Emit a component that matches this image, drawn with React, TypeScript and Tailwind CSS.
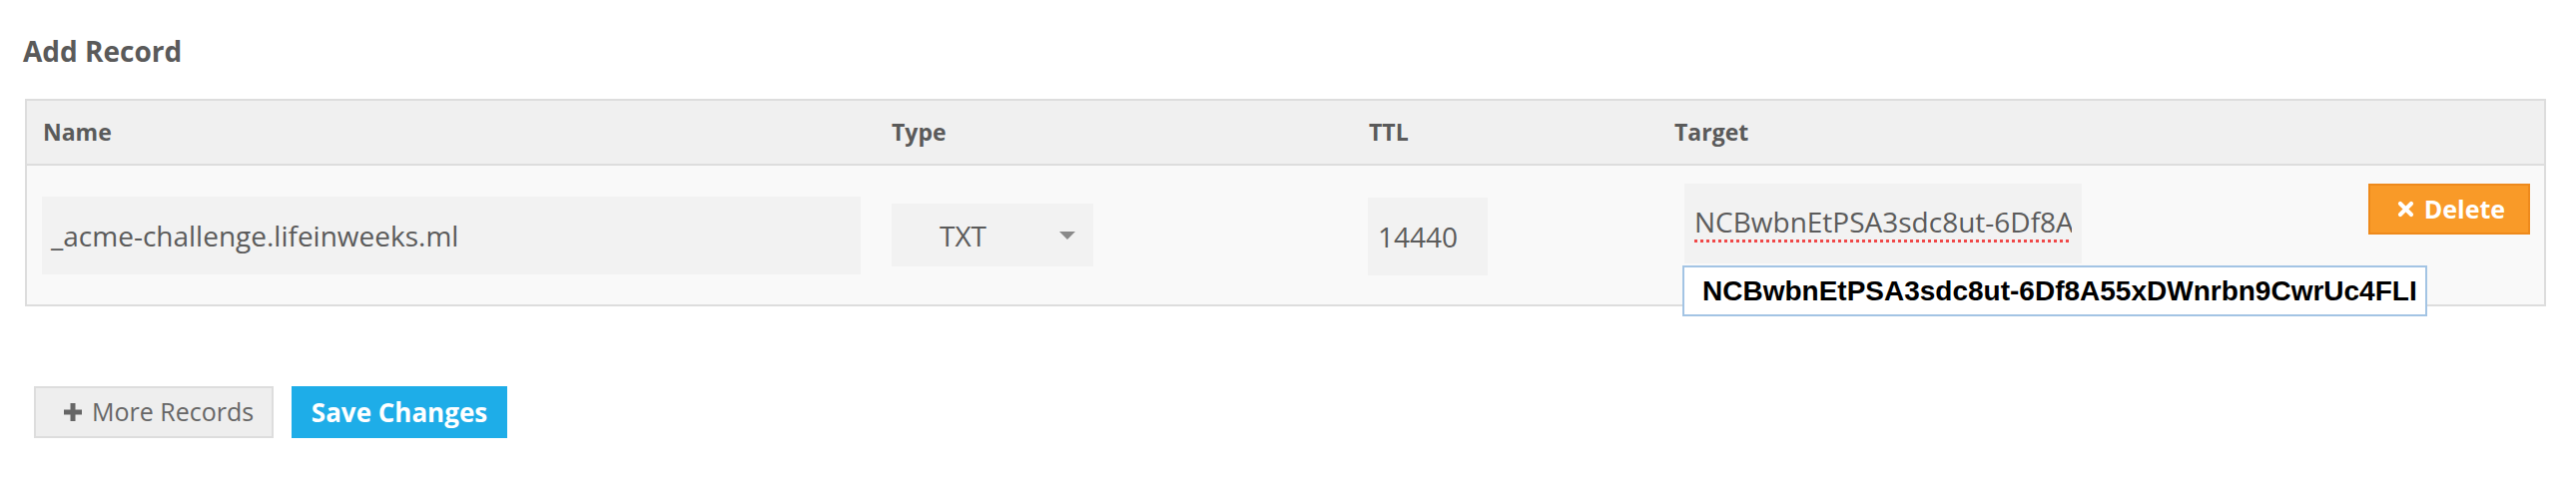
const PlusIcon = () => (
  <svg width="20" height="20" viewBox="0 0 20 20" className="shrink-0">
    <rect x="7.5" y="1" width="5" height="18" fill="#666" />
    <rect x="1" y="7.5" width="18" height="5" fill="#666" />
  </svg>
);

const TimesIcon = () => (
  <svg width="17" height="17" viewBox="0 0 17 17" className="shrink-0">
    <path d="M3 3 L14 14 M14 3 L3 14" stroke="#fff" strokeWidth="4.2" strokeLinecap="round" />
  </svg>
);

const App = () => {
  return (
    <div className="w-full h-[490px] bg-white pl-[23px] font-['Open_Sans',sans-serif] text-[#555]">
      {/* Title */}
      <h2 className="pt-[32px] text-[28px] leading-[38px] font-bold text-[#5a5a5a]">Add Record</h2>

      {/* Records table */}
      <div className="ml-[2px] mt-[29px] w-[2525px] border-2 border-[#ddd]">
        <div className="grid h-[65px] grid-cols-[850px_478px_306px_1fr] items-center border-b-2 border-[#ddd] bg-[#f0f0f0] pl-[16px] text-[23px] font-bold text-[#5a5a5a]">
          <span>Name</span>
          <span>Type</span>
          <span>TTL</span>
          <span>Target</span>
        </div>

        <div className="grid h-[139px] grid-cols-[850px_478px_306px_1fr_auto] items-start bg-[#f9f9f9] pl-[15px] pr-[14px] text-[28px] text-[#5b5b5b]">
          <div className="mt-[31px] flex h-[78px] w-[820px] items-center bg-[#f2f2f2] pl-[9px]">
            _acme-challenge.lifeinweeks.ml
          </div>

          <div className="mt-[38px] ml-[1px] flex h-[63px] w-[202px] items-center justify-between bg-[#f2f2f2] pl-[48px] pr-[18px]">
            <span>TXT</span>
            <svg width="16" height="9" viewBox="0 0 16 9" className="mt-[28px] self-start">
              <path d="M0 0 L16 0 L8 8 Z" fill="#8a8a8a" />
            </svg>
          </div>

          <div className="mt-[32px] flex h-[78px] w-[120px] items-center bg-[#f2f2f2] pl-[10px]">14440</div>

          <div className="relative mt-[18px] ml-[11px]">
            <div className="flex h-[80px] w-[398px] items-center overflow-hidden whitespace-nowrap bg-[#f2f2f2] pl-[10px] pr-[10px] pb-[4px]">
              <span className="block w-full overflow-hidden underline decoration-[#f04848] decoration-dotted decoration-[3px] underline-offset-[7px]">
                NCBwbnEtPSA3sdc8ut-6Df8A55xDWnrbn9CwrUc4FLI
              </span>
            </div>
            {/* Autocomplete suggestion */}
            <div className="absolute left-[-2px] top-[82px] flex h-[51px] w-[746px] items-center border-2 border-[#a3c4e4] bg-white pl-[18px] font-['Liberation_Sans',Arial,sans-serif] text-[28px] font-bold text-black">
              NCBwbnEtPSA3sdc8ut-6Df8A55xDWnrbn9CwrUc4FLI
            </div>
          </div>

          <button className="mt-[18px] flex h-[51px] w-[162px] items-center justify-center gap-[10px] border-2 border-[#ee8a1c] bg-[#f99a28] pl-[4px] text-[25px] font-bold text-white">
            <TimesIcon />
            Delete
          </button>
        </div>
      </div>

      {/* Actions */}
      <div className="ml-[11px] mt-[80px] flex gap-[18px]">
        <button className="flex h-[52px] w-[240px] items-center gap-[9px] border-2 border-[#ddd] bg-[#eee] pl-[27px] text-[25px] text-[#666]">
          <PlusIcon />
          More Records
        </button>
        <button className="flex h-[52px] w-[216px] items-center justify-center bg-[#1eade8] text-[26px] font-bold text-white">
          Save Changes
        </button>
      </div>
    </div>
  );
};

export default App;
